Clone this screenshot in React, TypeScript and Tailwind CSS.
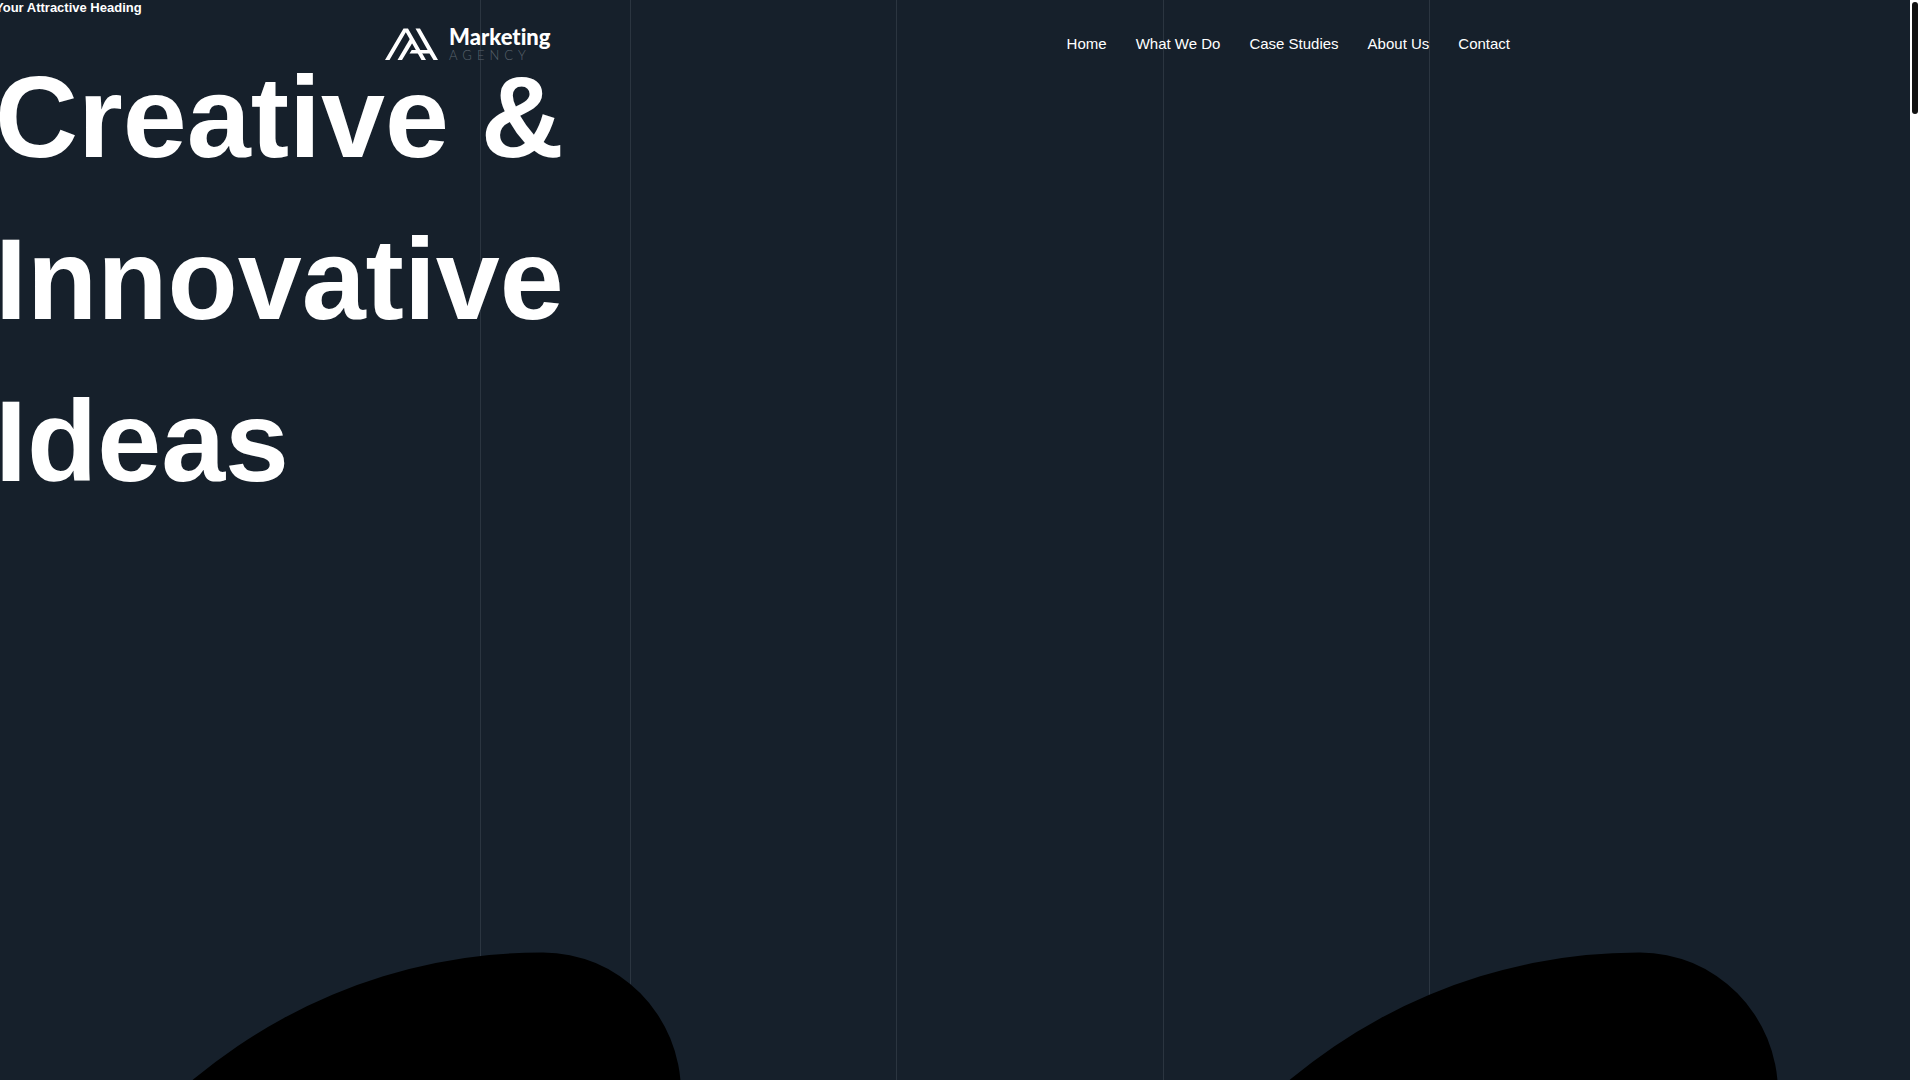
const links = ["Home", "What We Do", "Case Studies", "About Us", "Contact"];

function Logo() {
  return (
    <a href="#" aria-label="Marketing Agency" className="flex items-start gap-[11px] text-white">
      <svg viewBox="0 0 53 33" className="h-[33px] w-[53px]" fill="currentColor" aria-hidden="true">
        <path d="M0 32 18.5 0.5H23L41 32H36.500L20.800 4.300 4.500 32Z" />
        <path d="M12.500 32 26 9 28.500 13 17 32Z" />
        <path d="M30.500 0.500H35L53 32H48.500L44.500 25.500H24.500L26.700 22H42.600Z" />
      </svg>
      <span className="flex flex-col font-[Lato,sans-serif]">
        <span className="text-[22px] leading-[18px] font-black [font-variant-ligatures:none]">Marketing</span>
        <span className="mt-0.5 text-[13px] leading-[14px] font-light tracking-[5px] text-[#59626c]">AGENCY</span>
      </span>
    </a>
  );
}

function Blob() {
  return (
    <svg viewBox="0 0 682 128" className="h-32 w-[682px] shrink-0" aria-hidden="true">
      <path d="M-8 560A550 560 0 0 1 543 0.500A138 140 0 0 1 681 140V560Z" fill="#000" />
    </svg>
  );
}

export default function App() {
  return (
    <div className="flex h-screen overflow-hidden bg-white font-['Liberation_Sans',Arial,sans-serif]">
      <div className="relative flex min-w-0 flex-1 flex-col overflow-hidden bg-[#16202b] text-white">
        <div className="absolute inset-y-0 left-[480px] w-px bg-[#2b3540]" />
        <div className="absolute inset-y-0 left-[630px] flex w-[800px] justify-between">
          <div className="w-px bg-[#2b3540]" />
          <div className="w-px bg-[#2b3540]" />
          <div className="w-px bg-[#2b3540]" />
          <div className="w-px bg-[#2b3540]" />
        </div>

        <header className="absolute inset-x-0 top-0 z-10 flex justify-center pt-7">
          <div className="flex w-[1140px] items-start justify-between pr-[15px]">
            <Logo />
            <nav className="flex gap-[29px] text-[15px] leading-8">
              {links.map((l) => (
                <a key={l} href="#">{l}</a>
              ))}
            </nav>
          </div>
        </header>

        <main className="relative flex flex-1 flex-col">
          <div className="-ml-[5px]">
            <p className="text-[13px] leading-4 font-bold">Your Attractive Heading</p>
            <h1 className="mt-5 text-[115px] leading-[162px] font-bold">
              Creative &amp;
              <br />
              Innovative
              <br />
              Ideas
            </h1>
          </div>
          <div className="mt-auto flex gap-[415px]">
            <Blob />
            <Blob />
          </div>
        </main>
      </div>
      <div className="w-[10px] shrink-0 px-0.5 pt-0.5">
        <div className="h-28 w-1.5 rounded-full bg-[#111]" />
      </div>
    </div>
  );
}
